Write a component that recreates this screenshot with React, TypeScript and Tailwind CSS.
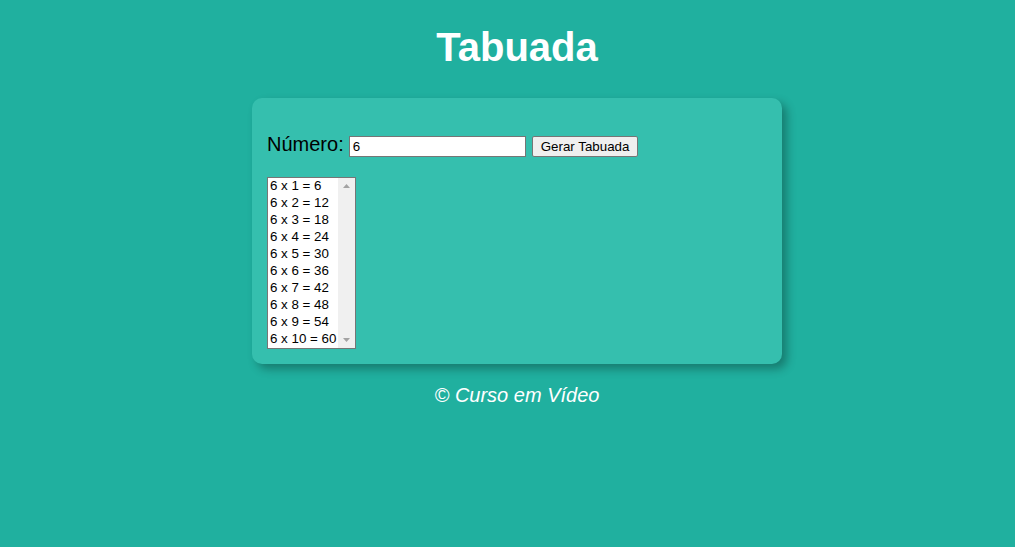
import React from "react";

export default function App() {
  const rows = Array.from({ length: 10 }, (_, i) => `6 x ${i + 1} = ${6 * (i + 1)}`);
  return (
    <div
      className="min-h-screen bg-[#20b09f] pl-[19px] text-white"
      style={{ fontFamily: '"Liberation Sans", Arial, sans-serif' }}
    >
      <h1 className="pt-[24px] text-center text-[40px] font-bold leading-[46px]">Tabuada</h1>
      <section className="mx-auto mt-[28px] w-[530px] rounded-[10px] bg-[#35bfae] p-[15px] text-black shadow-[5px_5px_10px_rgba(0,0,0,0.3)]">
        <div className="mt-[20px] mb-[20px] flex items-start text-[20px] leading-[23px]">
          <span>Número:</span>
          <div className="ml-[5px] mt-[3px] flex h-[21px] w-[177px] items-center border border-[#767676] bg-white px-[3px] text-[13.33px]">
            6
          </div>
          <div className="ml-[6px] mt-[3px] flex h-[21px] items-center rounded-[2px] border border-[#767676] bg-[#efefef] px-[8px] text-[13.33px]">
            Gerar Tabuada
          </div>
        </div>
        <div className="flex h-[172px] w-[89px] overflow-hidden border border-[#767676] bg-white">
          <div className="-mt-[1px] flex-1 pl-[2px] text-[13.33px] leading-[17px]">
            {rows.map((r) => (
              <div key={r} className="whitespace-nowrap">{r}</div>
            ))}
          </div>
          <div className="flex w-[17px] flex-col justify-between bg-[#f0f0f0] py-[5px]">
            <svg width="17" height="6" viewBox="0 0 17 6">
              <polygon points="5,5 8.5,1 12,5" fill="#a3a3a3" />
            </svg>
            <svg width="17" height="6" viewBox="0 0 17 6">
              <polygon points="5,1 8.5,5 12,1" fill="#a3a3a3" />
            </svg>
          </div>
        </div>
      </section>
      <p className="mt-[20px] text-center text-[20px] italic leading-[23px]">© Curso em Vídeo</p>
    </div>
  );
}
